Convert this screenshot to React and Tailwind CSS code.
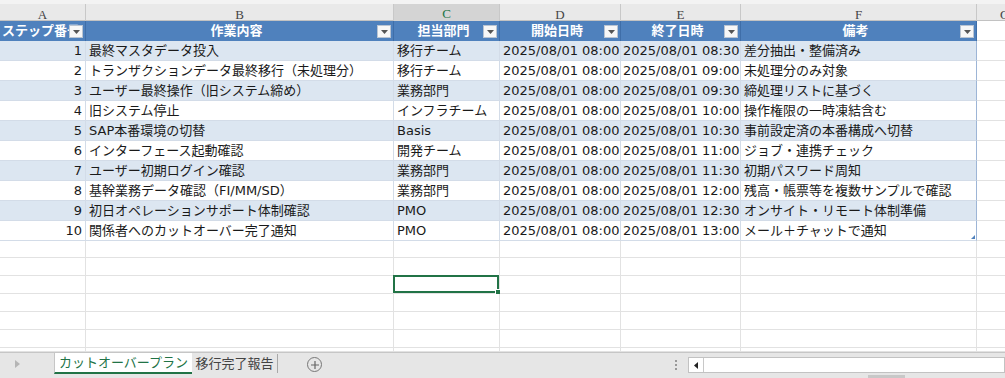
import React from 'react'

const cols = ['A', 'B', 'C', 'D', 'E', 'F']
const grid = 'grid grid-cols-[86px_308px_106px_121px_120px_236px_1fr]'

const headers = ['ステップ番号', '作業内容', '担当部門', '開始日時', '終了日時', '備考']

const rows = [
  [1, '最終マスタデータ投入', '移行チーム', '08:30', '差分抽出・整備済み'],
  [2, 'トランザクションデータ最終移行（未処理分）', '移行チーム', '09:00', '未処理分のみ対象'],
  [3, 'ユーザー最終操作（旧システム締め）', '業務部門', '09:30', '締処理リストに基づく'],
  [4, '旧システム停止', 'インフラチーム', '10:00', '操作権限の一時凍結含む'],
  [5, 'SAP本番環境の切替', 'Basis', '10:30', '事前設定済の本番構成へ切替'],
  [6, 'インターフェース起動確認', '開発チーム', '11:00', 'ジョブ・連携チェック'],
  [7, 'ユーザー初期ログイン確認', '業務部門', '11:30', '初期パスワード周知'],
  [8, '基幹業務データ確認（FI/MM/SD）', '業務部門', '12:00', '残高・帳票等を複数サンプルで確認'],
  [9, '初日オペレーションサポート体制確認', 'PMO', '12:30', 'オンサイト・リモート体制準備'],
  [10, '関係者へのカットオーバー完了通知', 'PMO', '13:00', 'メール＋チャットで通知'],
]

// heights of the empty rows below the table
const emptyRows = [17, 18, 18, 18, 18, 18, 4]

function FilterButton() {
  return (
    <div className="absolute right-[2px] top-[4px] w-[14px] h-[13px] bg-[#f7f7f7] border border-[#b9c4d2] flex items-center justify-center">
      <svg width="7" height="4" viewBox="0 0 7 4"><path d="M0 0h7L3.5 4z" fill="#555" /></svg>
    </div>
  )
}

export default function App() {
  return (
    <div className="w-[1005px] h-[378px] overflow-hidden bg-white text-[13px] text-[#1a1a1a] flex flex-col"
      style={{ fontFamily: '"DejaVu Sans", "Noto Sans CJK JP", sans-serif' }}>

      {/* top strip */}
      <div className="h-[4px] bg-[#f3f3f3] shrink-0" />

      {/* Column letters */}
      <div className={`${grid} h-[17px] shrink-0 bg-[#e9e9e9] border-b border-[#c2c2c2]`}>
        {cols.map(c => (
          <div key={c}
            className={`flex items-center justify-center border-r border-[#c8c8c8] text-[13px] ${c === 'C' ? 'bg-[#d4d4d4] text-[#217346] border-b-2 border-b-[#217346]' : 'text-[#444]'}`}
            style={{ fontFamily: '"Liberation Serif", serif' }}>
            {c}
          </div>
        ))}
        <div className="flex items-center pl-[23px] text-[#444] whitespace-nowrap overflow-hidden" style={{ fontFamily: '"Liberation Serif", serif' }}>G</div>
      </div>

      {/* Table header */}
      <div className={`${grid} h-[20px] shrink-0`}>
        {headers.map((h, i) => (
          <div key={h}
            className={`relative overflow-hidden bg-[#4f81bd] border-r border-[#3f6ea8] text-white font-bold flex items-center whitespace-nowrap ${i === 0 ? 'justify-start pl-[2px]' : 'justify-center'}`}>
            <span className={i === 0 ? '' : 'pr-[6px]'}>{h}</span>
            <FilterButton />
          </div>
        ))}
        <div className="border-b border-[#e2e2e2]" />
      </div>

      {/* Data rows */}
      {rows.map(([n, task, dept, end, note], i) => {
        const band = i % 2 === 0 ? 'bg-[#dce6f1]' : 'bg-white'
        const cell = `${band} border-r border-b border-[#d3dce8] flex items-center whitespace-nowrap overflow-hidden`
        return (
          <div key={n} className={`${grid} h-[20px] shrink-0`}>
            <div className={`${cell} justify-end pr-[3px]`}>{n}</div>
            <div className={`${cell} pl-[3px]`}>{task}</div>
            <div className={`${cell} pl-[3px]`}>{dept}</div>
            <div className={`${cell} pl-[3px]`}>2025/08/01 08:00</div>
            <div className={`${cell} pl-[2px]`}>2025/08/01 {end}</div>
            <div className={`${cell} pl-[3px] relative border-r-[#9db5d6]`}>
              {note}
              {i === rows.length - 1 && (
                <svg className="absolute right-[1px] bottom-[1px]" width="4" height="4" viewBox="0 0 4 4">
                  <path d="M4 0v4H0z" fill="#4f81bd" />
                </svg>
              )}
            </div>
            <div className="border-b border-[#e2e2e2]" />
          </div>
        )
      })}

      {/* Empty rows */}
      {emptyRows.map((h, r) => (
        <div key={r} className={`${grid} shrink-0`} style={{ height: h }}>
          {cols.map((c, ci) => (
            <div key={c} className="relative border-r border-b border-[#e2e2e2]">
              {r === 2 && ci === 2 && (
                <div className="absolute -left-[1px] -top-[1px] right-0 bottom-0 border-2 border-[#217346]">
                  <div className="absolute -right-[4px] -bottom-[4px] w-[6px] h-[6px] bg-[#217346] border border-white" />
                </div>
              )}
            </div>
          ))}
          <div className="border-b border-[#e2e2e2]" />
        </div>
      ))}

      {/* Sheet tab bar */}
      <div className="flex-1 bg-[#e6e6e6] border-t border-[#c6c6c6] flex items-start relative">
        <div className="w-[54px] h-[21px] flex items-center pl-[15px]">
          <svg width="5" height="8" viewBox="0 0 5 8"><path d="M0 0l5 4-5 4z" fill="#b5b5b5" /></svg>
        </div>
        <div className="w-[138px] h-[21px] bg-white border-l border-[#c6c6c6] border-b-2 border-b-[#217346] text-[#217346] flex items-center justify-center text-[13px]">
          カットオーバープラン
        </div>
        <div className="w-[86px] h-[19px] mt-[1px] border-r border-[#a8a8a8] text-[#444] flex items-center justify-center text-[13px]">
          移行完了報告
        </div>
        <div className="ml-[29px] mt-[4px] w-[15px] h-[15px] rounded-full border border-[#777] flex items-center justify-center">
          <svg width="8" height="8" viewBox="0 0 8 8"><path d="M4 0v8M0 4h8" stroke="#666" strokeWidth="1.2" /></svg>
        </div>
        <div className="ml-[353px] mt-[7px] flex flex-col gap-[2px]">
          <div className="w-[2px] h-[2px] bg-[#999]" />
          <div className="w-[2px] h-[2px] bg-[#999]" />
          <div className="w-[2px] h-[2px] bg-[#999]" />
        </div>
        <div className="ml-[11px] mt-[4px] flex-1 h-[16px] bg-white border border-[#c2c2c2] flex">
          <div className="w-[15px] h-full border-r border-[#c8c8c8] flex items-center justify-center">
            <svg width="4" height="7" viewBox="0 0 4 7"><path d="M4 0v7L0 3.5z" fill="#222" /></svg>
          </div>
        </div>
        <div className="absolute left-[868px] bottom-0 w-[37px] h-[3px] bg-[#c8c8c8]" />
      </div>
    </div>
  )
}
